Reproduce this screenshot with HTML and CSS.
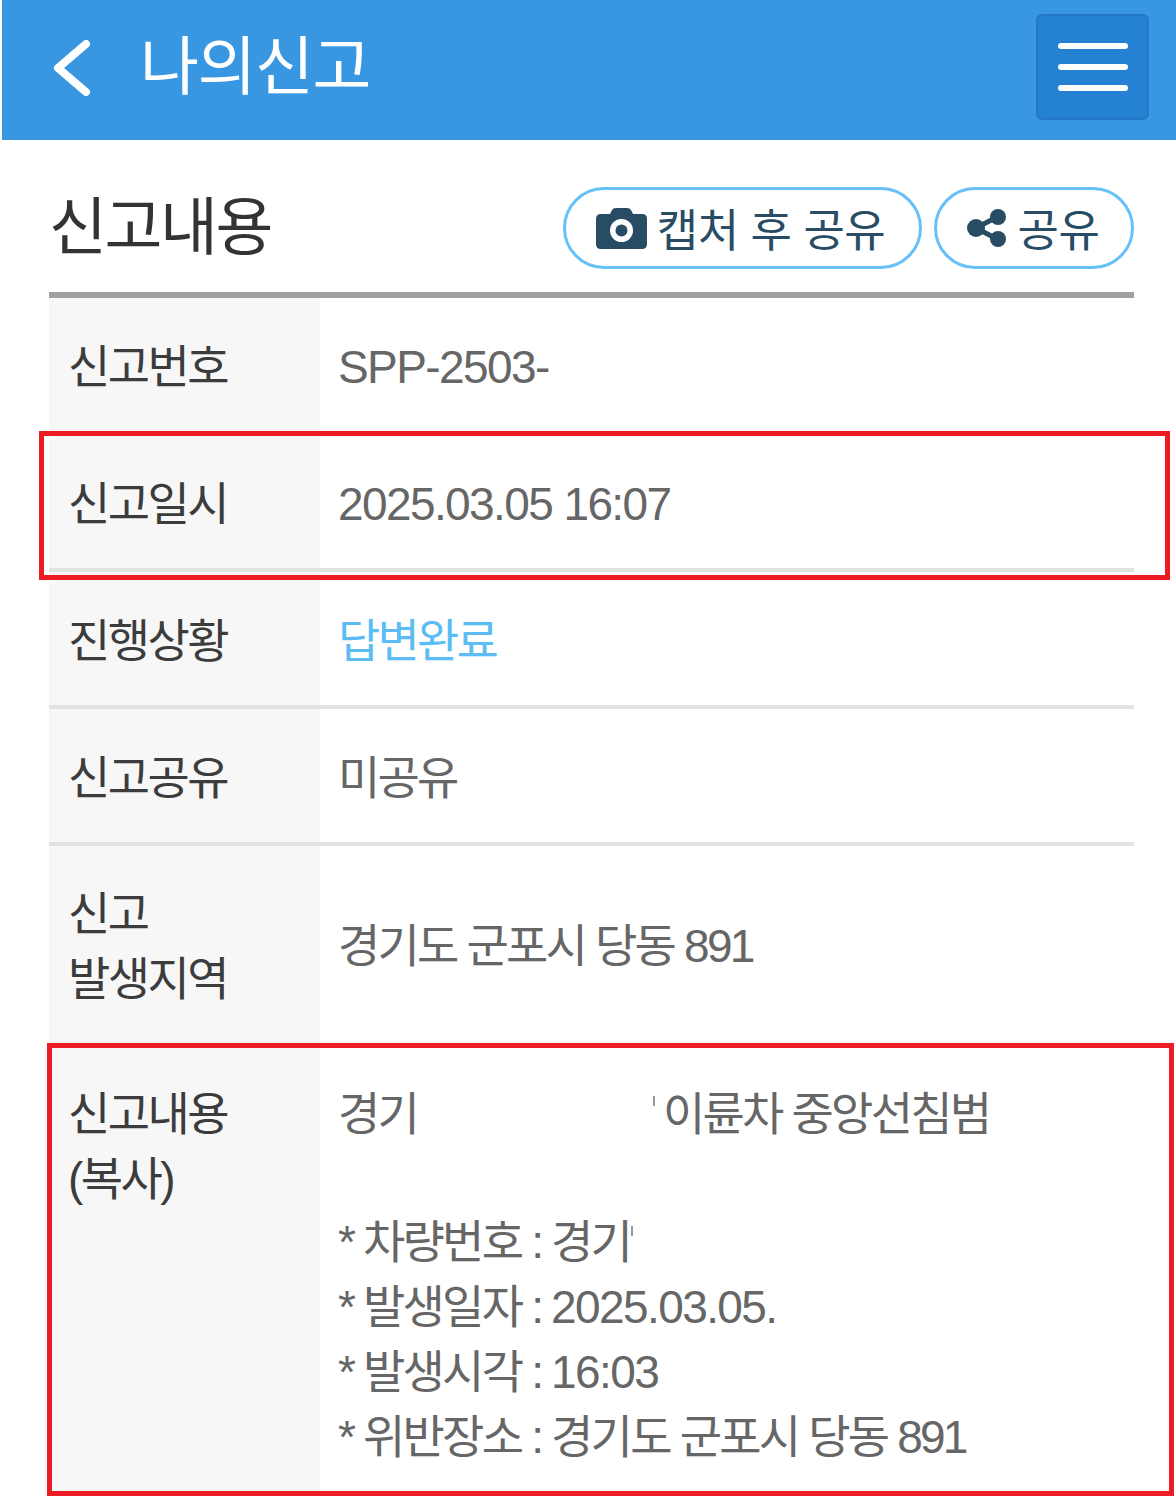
FILE: index.html
```html
<!DOCTYPE html>
<html lang="ko">
<head>
  <meta charset="UTF-8">
  <title>나의신고</title>
  <link rel="stylesheet" href="styles.css">
</head>
<body>
  <div class="header">
    <svg class="back" width="40" height="56" viewBox="0 0 40 56">
      <polyline points="34,4 6,28 34,52" fill="none" stroke="#fff" stroke-width="8" stroke-linecap="round" stroke-linejoin="round"/>
    </svg>
    <div class="header-title">나의신고</div>
    <div class="menu">
      <span></span>
      <span></span>
      <span></span>
    </div>
  </div>
  <div class="content">
    <div class="top">
      <div class="top-title">신고내용</div>
      <div class="btns">
        <div class="btn btn-capture">
          <svg width="51" height="41" viewBox="0 0 51 41">
            <path fill="#274c63" fill-rule="evenodd" d="M5 6h9l2-4q1-2 4-2h11q3 0 4 2l2 4h9q5 0 5 5v25q0 5-5 5H5q-5 0-5-5V11q0-5 5-5zM25.500 11a11.500 11.500 0 1 0 0 23a11.500 11.500 0 1 0 0-23z"/>
            <circle cx="25.500" cy="22.500" r="6" fill="#274c63"/>
          </svg>
          <span>캡처 후 공유</span>
        </div>
        <div class="btn btn-share">
          <svg width="40" height="38" viewBox="0 0 40 38">
            <path d="M30 8 9 19l21 11" fill="none" stroke="#274c63" stroke-width="5"/>
            <circle cx="31" cy="8" r="8" fill="#274c63"/>
            <circle cx="9" cy="19" r="9" fill="#274c63"/>
            <circle cx="31" cy="30" r="8" fill="#274c63"/>
          </svg>
          <span>공유</span>
        </div>
      </div>
    </div>
    <div class="list">
      <div class="row">
        <div class="label">신고번호</div>
        <div class="value num">SPP-2503-</div>
      </div>
      <div class="row">
        <div class="label">신고일시</div>
        <div class="value num">2025.03.05 16:07</div>
      </div>
      <div class="row">
        <div class="label">진행상황</div>
        <div class="value done">답변완료</div>
      </div>
      <div class="row">
        <div class="label">신고공유</div>
        <div class="value">미공유</div>
      </div>
      <div class="row row-area">
        <div class="label">신고<br>발생지역</div>
        <div class="value">경기도 군포시 당동 891</div>
      </div>
      <div class="row row-detail">
        <div class="label">신고내용<br>(복사)</div>
        <div class="value">
          <div>경기<span class="hidden-a"><i class="sliver sliver-top"></i></span>이륜차 중앙선침범</div>
          <div class="blank"></div>
          <div>* 차량번호 : 경기<i class="sliver"></i></div>
          <div>* 발생일자 : <span class="num">2025.03.05.</span></div>
          <div>* 발생시각 : <span class="num">16:03</span></div>
          <div>* 위반장소 : 경기도 군포시 당동 891</div>
        </div>
      </div>
    </div>
  </div>
  <div class="mark mark-date"></div>
  <div class="mark mark-detail"></div>
</body>
</html>
```

FILE: styles.css
```css
* {
  margin: 0;
  padding: 0;
  box-sizing: border-box;
}
html,
body {
  height: 1496px;
  overflow: hidden;
}
body {
  position: relative;
  background-color: #fff;
  font-family: "Liberation Sans", "Noto Sans CJK KR", sans-serif;
}
.header {
  display: flex;
  align-items: center;
  height: 140px;
  margin-left: 2px;
  padding: 0 27px 0 50px;
  background-color: #3997e2;
}
.back {
  margin-top: -4px;
}
.header-title {
  flex: 1;
  margin-left: 48px;
  margin-top: -18px;
  font-size: 64px;
  letter-spacing: -1.400px;
  color: #fff;
}
.menu {
  display: flex;
  flex-direction: column;
  align-items: center;
  justify-content: center;
  gap: 15px;
  width: 113px;
  height: 106px;
  margin-top: -7px;
  border: 2px solid #2278c4;
  border-radius: 6px;
  background-color: #2581d2;
}
.menu span {
  width: 70px;
  height: 6px;
  border-radius: 3px;
  background-color: #fff;
}
.content {
  margin: 0 42px 0 49px;
}
.top {
  display: flex;
  align-items: center;
  justify-content: space-between;
  height: 152px;
}
.top-title {
  margin-top: 10px;
  font-size: 63px;
  letter-spacing: -2.500px;
  color: #333;
}
.btns {
  display: flex;
  gap: 12px;
  margin-top: 24px;
}
.btn {
  display: flex;
  align-items: center;
  justify-content: center;
  height: 82px;
  border: 3px solid #66c1f8;
  border-radius: 41px;
  font-size: 45px;
  letter-spacing: -0.500px;
  color: #274c63;
}
.btn-capture {
  width: 359px;
  padding-right: 4px;
  gap: 10px;
}
.btn-share {
  width: 200px;
  padding-right: 2px;
  gap: 11px;
}
.btn span {
  margin-top: -2px;
}
.list {
  border-top: 6px solid #a0a0a0;
}
.row {
  display: flex;
  height: 137px;
  border-bottom: 4px solid #e2e2e2;
  font-size: 46px;
  letter-spacing: -2.600px;
  line-height: 65px;
}
.label {
  display: flex;
  align-items: center;
  width: 271px;
  padding-left: 19px;
  padding-top: 5px;
  background-color: #f7f7f7;
  color: #3c3c3c;
}
.value {
  display: flex;
  align-items: center;
  padding-left: 18px;
  padding-top: 5px;
  letter-spacing: -2.800px;
  color: #666;
}
.num {
  letter-spacing: -1.600px;
}
.done {
  color: #5cbdf5;
}
.row-area {
  height: 201px;
  border-bottom: 0;
}
.row-area .label,
.row-area .value {
  padding-top: 0;
}
.row-detail {
  height: 450px;
  border-bottom: 0;
}
.row-detail .label {
  align-items: flex-start;
  padding-top: 35px;
}
.row-detail .value {
  display: block;
  padding-top: 35px;
}
.hidden-a {
  display: inline-block;
  width: 246px;
}
.blank {
  height: 63px;
}
.sliver {
  display: inline-block;
  width: 2px;
  height: 10px;
  margin-left: 1px;
  vertical-align: 22px;
  background-color: #999;
}
.sliver-top {
  margin-left: 236px;
  vertical-align: 24px;
}
.mark {
  position: absolute;
  border: 5px solid #ed1c24;
}
.mark-date {
  left: 39px;
  top: 431px;
  width: 1131px;
  height: 149px;
}
.mark-detail {
  left: 47px;
  top: 1043px;
  width: 1127px;
  height: 453px;
}
```
